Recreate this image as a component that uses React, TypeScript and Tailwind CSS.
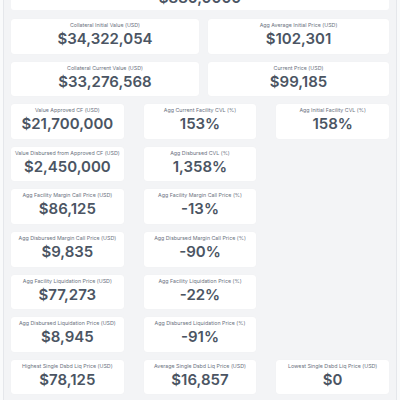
import React from "react";

type Item = { label: string; value: string } | null;

function Card({ label, value }: { label: string; value: string }) {
  return (
    <div className="h-[34.6px] rounded-[3px] bg-white shadow-[0_0_1px_rgba(0,0,0,0.06)] flex flex-col items-center pt-[3px] overflow-hidden">
      <div className="text-[5.3px] leading-[7px] text-[#6b7280] whitespace-nowrap">{label}</div>
      <div className="mt-[2px] text-[15px] leading-[15px] font-semibold text-[#4b5563] whitespace-nowrap">
        {value}
      </div>
    </div>
  );
}

const twoCol: Item[] = [
  { label: "Collateral Initial Value (USD)", value: "$34,322,054" },
  { label: "Agg Average Initial Price (USD)", value: "$102,301" },
  { label: "Collateral Current Value (USD)", value: "$33,276,568" },
  { label: "Current Price (USD)", value: "$99,185" },
];

const threeCol: Item[] = [
  { label: "Value Approved CF (USD)", value: "$21,700,000" },
  { label: "Agg Current Facility CVL (%)", value: "153%" },
  { label: "Agg Initial Facility CVL (%)", value: "158%" },
  { label: "Value Disbursed from Approved CF (USD)", value: "$2,450,000" },
  { label: "Agg Disbursed CVL (%)", value: "1,358%" },
  null,
  { label: "Agg Facility Margin Call Price (USD)", value: "$86,125" },
  { label: "Agg Facility Margin Call Price (%)", value: "-13%" },
  null,
  { label: "Agg Disbursed Margin Call Price (USD)", value: "$9,835" },
  { label: "Agg Disbursed Margin Call Price (%)", value: "-90%" },
  null,
  { label: "Agg Facility Liquidation Price (USD)", value: "$77,273" },
  { label: "Agg Facility Liquidation Price (%)", value: "-22%" },
  null,
  { label: "Agg Disbursed Liquidation Price (USD)", value: "$8,945" },
  { label: "Agg Disbursed Liquidation Price (%)", value: "-91%" },
  null,
  { label: "Highest Single Dsbd Liq Price (USD)", value: "$78,125" },
  { label: "Average Single Dsbd Liq Price (USD)", value: "$16,857" },
  { label: "Lowest Single Dsbd Liq Price (USD)", value: "$0" },
];

export default function App() {
  return (
    <div
      className="h-[400px] w-[400px] overflow-hidden bg-[#f9fafb] px-[3px]"
      style={{ fontFamily: "Inter, 'Noto Sans', sans-serif" }}
    >
      <div className="min-h-[440px] border-x border-[#e5e7eb] bg-[#f3f4f6] px-[7px]">
        <div className="mt-[-25px] flex flex-col gap-2">
          <div className="h-[35px] rounded-[3px] bg-white flex flex-col items-center pt-[3px]">
            <div className="text-[5.3px] leading-[7px] text-[#6b7280]">Total Collateral (BTC)</div>
            <div className="mt-[5px] text-[15px] leading-[15px] font-semibold text-[#4b5563]">$880,0000</div>
          </div>
          <div className="grid grid-cols-[188fr_181fr] gap-x-[9px] gap-y-2 mt-[1px]">
            {twoCol.map((it, i) => (it ? <Card key={i} {...it} /> : <div key={i} />))}
          </div>
          <div className="grid grid-cols-3 gap-x-5 gap-y-2">
            {threeCol.map((it, i) => (it ? <Card key={i} {...it} /> : <div key={i} />))}
          </div>
        </div>
      </div>
    </div>
  );
}
